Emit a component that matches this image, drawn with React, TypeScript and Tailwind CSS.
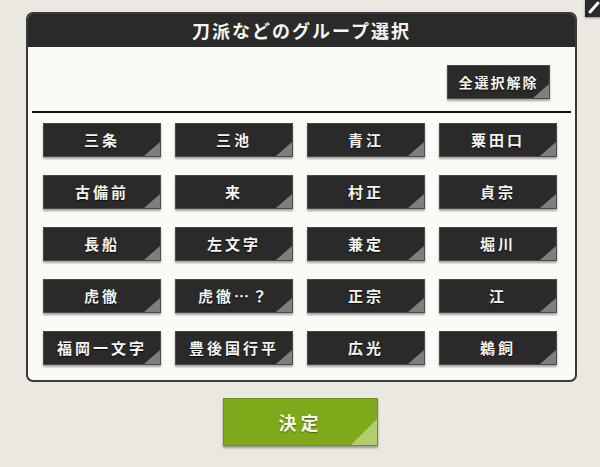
import React from "react";

const groups = [
  "三条", "三池", "青江", "粟田口",
  "古備前", "来", "村正", "貞宗",
  "長船", "左文字", "兼定", "堀川",
  "虎徹", "虎徹…？", "正宗", "江",
  "福岡一文字", "豊後国行平", "広光", "鵜飼",
];

const font = { fontFamily: '"Noto Sans CJK JP", "Noto Sans", sans-serif' };

const DarkButton = ({ label, className = "" }: { label: string; className?: string }) => (
  <div
    className={`relative flex items-center justify-center bg-[#2a2a2a] border border-[#4a4a4a] shadow-[0_2px_2px_rgba(0,0,0,0.35)] text-[#f4f4f0] font-bold overflow-hidden ${className}`}
  >
    <span className="relative z-10 [text-shadow:0_1px_1px_rgba(0,0,0,0.8)]">{label}</span>
    <div className="absolute right-0 bottom-0 w-[16px] h-[14px] bg-[#7e7e7e] [clip-path:polygon(100%_0,100%_100%,0_100%)]" />
  </div>
);

export default function App() {
  return (
    <div className="relative w-[600px] h-[467px] bg-[#ebe8e2] overflow-hidden" style={font}>
      {/* corner button peeking at top right */}
      <div className="absolute right-0 top-0 w-[15px] h-[17px] bg-[#2a2a2a] shadow-[0_1px_2px_rgba(0,0,0,0.4)]">
        <svg viewBox="0 0 15 17" className="w-full h-full">
          <path d="M5 12 L13 3" stroke="#fff" strokeWidth="3" strokeLinecap="round" />
        </svg>
      </div>

      <div className="pt-[12px] pl-[26px]">
        <div className="w-[551px] h-[370px] border-2 border-[#3a3a3a] rounded-[7px] bg-[#fbfaf5] overflow-hidden flex flex-col">
          <div className="h-[33px] bg-[#2a2a2a] flex items-center justify-center text-[#f4f4f0] text-[18px] font-bold tracking-[2px] shrink-0">
            刀派などのグループ選択
          </div>

          <div className="h-[64px] flex justify-end items-start pt-[18px] pr-[25px] shrink-0">
            <DarkButton label="全選択解除" className="w-[103px] h-[34px] text-[14px] tracking-[2px]" />
          </div>

          <div className="mx-[4px] h-[2px] bg-[#111] shrink-0" />

          <div className="pt-[10px] pl-[15px] grid grid-cols-[repeat(4,118px)] gap-x-[14px] gap-y-[18px]">
            {groups.map((g) => (
              <DarkButton key={g} label={g} className="h-[34px] text-[15px] tracking-[3px]" />
            ))}
          </div>
        </div>
      </div>

      <div className="flex justify-center pt-[16px] pl-[1px]">
        <div className="relative w-[155px] h-[48px] bg-[#80a81b] border border-[#6f9315] shadow-[0_2px_2px_rgba(0,0,0,0.35)] flex items-center justify-center text-[#f7f7ec] text-[18px] font-bold tracking-[4px] overflow-hidden">
          <span className="relative z-10 [text-shadow:0_1px_1px_rgba(0,0,0,0.4)]">決定</span>
          <div className="absolute right-0 bottom-0 w-[26px] h-[26px] bg-[#b4cd6f] [clip-path:polygon(100%_0,100%_100%,0_100%)]" />
        </div>
      </div>
    </div>
  );
}
